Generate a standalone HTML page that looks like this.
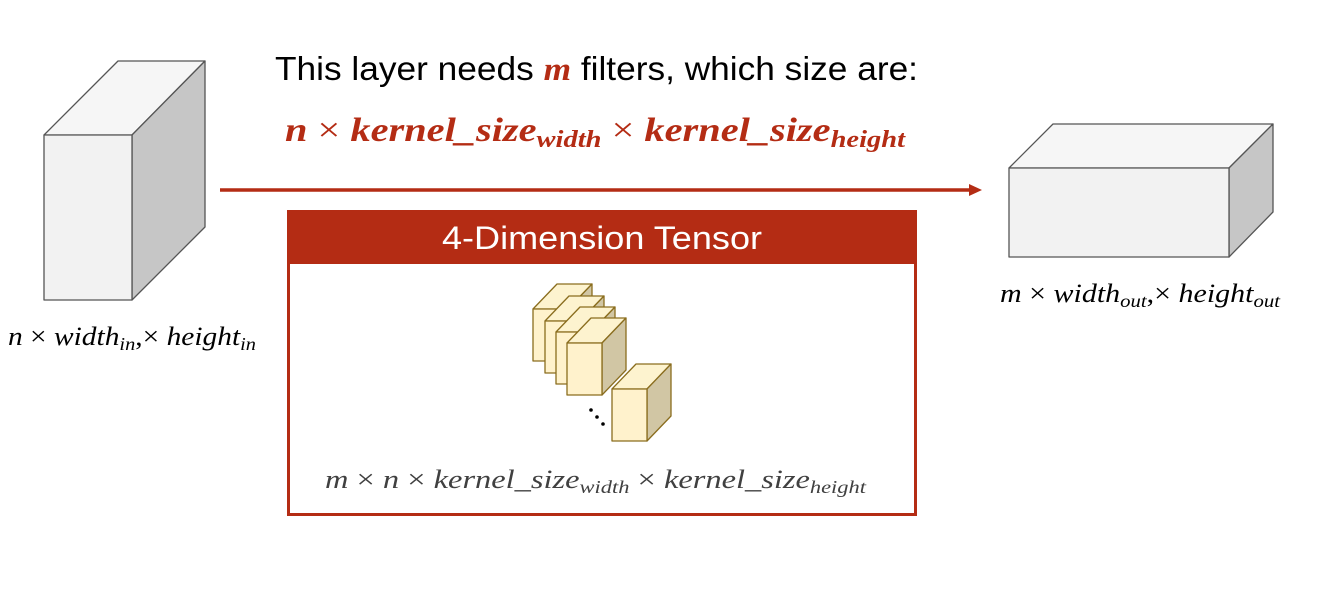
<!DOCTYPE html>
<html><head><meta charset="utf-8"><style>
html,body{margin:0;padding:0;background:#fff;width:1331px;height:613px;overflow:hidden}
svg{display:block}
.ui{font-family:"Liberation Sans",sans-serif}
.m{font-family:"Liberation Serif","DejaVu Serif",serif;font-style:italic}
</style></head><body>
<svg width="1331" height="613" viewBox="0 0 1331 613" xmlns="http://www.w3.org/2000/svg">
<g stroke="#555" stroke-width="1.3" stroke-linejoin="round">
<polygon points="44,135 118,61 205,61 132,135" fill="#f6f6f6"/>
<polygon points="132,135 205,61 205,227 132,300" fill="#c6c6c6"/>
<rect x="44" y="135" width="88" height="165" fill="#f2f2f2"/>
</g>
<g stroke="#555" stroke-width="1.3" stroke-linejoin="round">
<polygon points="1009,168 1053,124 1273,124 1229,168" fill="#f6f6f6"/>
<polygon points="1229,168 1273,124 1273,212 1229,257" fill="#c6c6c6"/>
<rect x="1009" y="168" width="220" height="89" fill="#f2f2f2"/>
</g>
<line x1="220" y1="190" x2="972" y2="190" stroke="#b42c14" stroke-width="3.5"/>
<polygon points="969,184 982,190 969,196" fill="#b42c14"/>
<rect x="288.5" y="211.5" width="627" height="303" fill="#fff" stroke="#b42c14" stroke-width="3"/>
<rect x="287" y="210" width="630" height="54" fill="#b42c14"/>
<text class="ui" x="602" y="249" font-size="32" fill="#fff" text-anchor="middle" textLength="320" lengthAdjust="spacingAndGlyphs">4-Dimension Tensor</text>
<g stroke="#8a6d1e" stroke-width="1.3" stroke-linejoin="round">
<g>
<polygon points="533,309 557,284 592,284 568,309" fill="#fdf3cf"/>
<polygon points="568,309 592,284 592,336 568,361" fill="#d1c6a4"/>
<rect x="533" y="309" width="35" height="52" fill="#fff2cc"/>
</g>
<g transform="translate(12,12)">
<polygon points="533,309 557,284 592,284 568,309" fill="#fdf3cf"/>
<polygon points="568,309 592,284 592,336 568,361" fill="#d1c6a4"/>
<rect x="533" y="309" width="35" height="52" fill="#fff2cc"/>
</g>
<g transform="translate(23,23)">
<polygon points="533,309 557,284 592,284 568,309" fill="#fdf3cf"/>
<polygon points="568,309 592,284 592,336 568,361" fill="#d1c6a4"/>
<rect x="533" y="309" width="35" height="52" fill="#fff2cc"/>
</g>
<g transform="translate(34,34)">
<polygon points="533,309 557,284 592,284 568,309" fill="#fdf3cf"/>
<polygon points="568,309 592,284 592,336 568,361" fill="#d1c6a4"/>
<rect x="533" y="309" width="35" height="52" fill="#fff2cc"/>
</g>
<g transform="translate(79,80)">
<polygon points="533,309 557,284 592,284 568,309" fill="#fdf3cf"/>
<polygon points="568,309 592,284 592,336 568,361" fill="#d1c6a4"/>
<rect x="533" y="309" width="35" height="52" fill="#fff2cc"/>
</g>
</g>
<circle cx="591" cy="410" r="1.8" fill="#000"/>
<circle cx="597" cy="417" r="1.8" fill="#000"/>
<circle cx="603" cy="424" r="1.8" fill="#000"/>
<text class="ui" x="275" y="80" font-size="33" fill="#000" textLength="643" lengthAdjust="spacingAndGlyphs">This layer needs <tspan class="m" font-weight="bold" fill="#b42c14">m</tspan> filters, which size are:</text>
<text class="m" x="285" y="141" font-size="34" font-weight="bold" fill="#b42c14" textLength="620" lengthAdjust="spacingAndGlyphs">n <tspan font-style="normal" font-weight="normal">×</tspan> kernel_size<tspan font-size="24" dy="6">width</tspan><tspan dy="-6" font-style="normal" font-weight="normal"> × </tspan>kernel_size<tspan font-size="24" dy="6">height</tspan></text>
<text class="m" x="8" y="345" font-size="26" fill="#000" textLength="248" lengthAdjust="spacingAndGlyphs">n <tspan font-style="normal">×</tspan> width<tspan font-size="18" dy="5">in</tspan><tspan dy="-5" font-style="normal">,×</tspan> height<tspan font-size="18" dy="5">in</tspan></text>
<text class="m" x="1000" y="302" font-size="26" fill="#000" textLength="280" lengthAdjust="spacingAndGlyphs">m <tspan font-style="normal">×</tspan> width<tspan font-size="18" dy="5">out</tspan><tspan dy="-5" font-style="normal">,×</tspan> height<tspan font-size="18" dy="5">out</tspan></text>
<text class="m" x="325" y="488" font-size="26" fill="#404040" textLength="541" lengthAdjust="spacingAndGlyphs">m <tspan font-style="normal">×</tspan> n <tspan font-style="normal">×</tspan> kernel_size<tspan font-size="18" dy="5">width</tspan><tspan dy="-5" font-style="normal"> × </tspan>kernel_size<tspan font-size="18" dy="5">height</tspan></text>
</svg>
</body></html>
